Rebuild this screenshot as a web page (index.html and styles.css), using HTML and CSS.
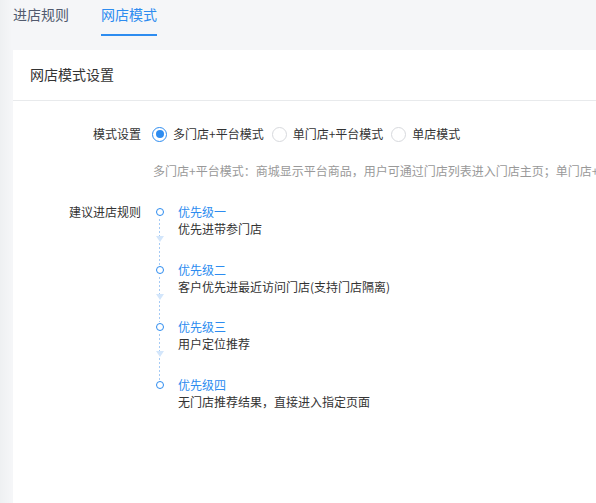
FILE: index.html
```html
<!DOCTYPE html>
<html lang="zh-CN">
<head>
<meta charset="utf-8">
<title>网店模式</title>
<link rel="stylesheet" href="styles.css">
</head>
<body>
<div class="page">
  <div class="tabs">
    <div class="tab">进店规则</div>
    <div class="tab active">网店模式</div>
  </div>
  <div class="card">
    <div class="card-head">网店模式设置</div>
    <div class="card-body">
      <div class="form-item">
        <div class="label label-tall">模式设置</div>
        <div class="content">
          <div class="radios">
            <span class="radio checked"><span class="radio-inner"></span><span class="radio-text">多门店+平台模式</span></span>
            <span class="radio"><span class="radio-inner"></span><span class="radio-text">单门店+平台模式</span></span>
            <span class="radio"><span class="radio-inner"></span><span class="radio-text">单店模式</span></span>
          </div>
          <div class="hint">多门店+平台模式：商城显示平台商品，用户可通过门店列表进入门店主页；单门店+平台模式：商城显示平台商品，用户进入指定门店</div>
        </div>
      </div>
      <div class="form-item rules">
        <div class="label">建议进店规则</div>
        <div class="content">
          <div class="timeline">
            <div class="tl-item">
              <div class="tl-axis"><span class="dot"></span><span class="seg seg-a"></span><span class="arrow"></span><span class="seg seg-b"></span></div>
              <div class="tl-content"><div class="tl-title">优先级一</div><div class="tl-desc">优先进带参门店</div></div>
            </div>
            <div class="tl-item">
              <div class="tl-axis"><span class="dot"></span><span class="seg seg-a"></span><span class="arrow"></span><span class="seg seg-b"></span></div>
              <div class="tl-content"><div class="tl-title">优先级二</div><div class="tl-desc">客户优先进最近访问门店(支持门店隔离)</div></div>
            </div>
            <div class="tl-item">
              <div class="tl-axis"><span class="dot"></span><span class="seg seg-a"></span><span class="arrow"></span><span class="seg seg-b"></span></div>
              <div class="tl-content"><div class="tl-title">优先级三</div><div class="tl-desc">用户定位推荐</div></div>
            </div>
            <div class="tl-item last">
              <div class="tl-axis"><span class="dot"></span></div>
              <div class="tl-content"><div class="tl-title">优先级四</div><div class="tl-desc">无门店推荐结果，直接进入指定页面</div></div>
            </div>
          </div>
        </div>
      </div>
    </div>
  </div>
</div>
</body>
</html>
```
FILE: styles.css
```css
html, body {
  margin: 0;
  padding: 0;
  height: 100%;
  overflow: hidden;
}
body {
  font-family: "Noto Sans CJK SC", "Liberation Sans", sans-serif;
  font-size: 12px;
  color: #333;
  background: linear-gradient(to right, #eef0f2 0, #f5f6f8 12px, #f5f6f8 100%);
}
.page {
  padding-left: 13px;
  height: 100%;
  display: flex;
  flex-direction: column;
}
.tabs {
  display: flex;
  gap: 32px;
  height: 36px;
}
.tab {
  font-size: 14px;
  line-height: 20px;
  padding-top: 4px;
  height: 30px;
  color: #515a6e;
  border-bottom: 2px solid transparent;
}
.tab.active {
  color: #2d8cf0;
  border-bottom-color: #2d8cf0;
}
.card {
  margin-top: 14px;
  background: #fff;
  flex: 1;
  overflow: hidden;
}
.card-head {
  height: 50px;
  line-height: 49px;
  padding-left: 17px;
  font-size: 14px;
  color: #333;
  border-bottom: 1px solid #e8eaec;
}
.card-body {
  padding-top: 17px;
}
.form-item {
  display: flex;
}
.label {
  width: 128px;
  flex: none;
  padding-right: 12px;
  text-align: right;
  line-height: 17px;
  color: #333;
}
.label-tall {
  line-height: 32px;
}
.content {
  flex: 1;
  min-width: 0;
}
.radios {
  height: 32px;
  display: flex;
  align-items: center;
  margin-left: -1px;
}
.radio {
  display: inline-flex;
  align-items: center;
  margin-right: 8px;
  color: #333;
  line-height: 18px;
}
.radio-inner {
  width: 15px;
  height: 15px;
  box-sizing: border-box;
  border: 1px solid #d7d9dd;
  border-radius: 50%;
  margin-right: 6px;
  background: #fff;
}
.radio.checked .radio-inner {
  border: 1.5px solid #2d8cf0;
  display: flex;
  align-items: center;
  justify-content: center;
}
.radio.checked .radio-inner::after {
  content: "";
  width: 8px;
  height: 8px;
  border-radius: 50%;
  background: #2d8cf0;
}
.hint {
  margin-top: 12px;
  line-height: 18px;
  color: #999;
  white-space: nowrap;
}
.rules {
  margin-top: 23px;
}
.timeline {
  display: flex;
  flex-direction: column;
}
.tl-item {
  display: flex;
}
.tl-axis {
  width: 13px;
  flex: none;
  margin-right: 12px;
  display: flex;
  flex-direction: column;
  align-items: center;
  padding-top: 5px;
}
.dot {
  width: 8px;
  height: 8px;
  box-sizing: border-box;
  border: 1.5px solid #2d8cf0;
  border-radius: 50%;
  flex: none;
}
.seg {
  width: 1px;
  background: repeating-linear-gradient(to bottom, #a6cbf5 0, #a6cbf5 2px, transparent 2px, transparent 4px);
}
.seg-a {
  height: 17px;
  margin-top: 3px;
}
.arrow {
  width: 0;
  height: 0;
  border-left: 4px solid transparent;
  border-right: 4px solid transparent;
  border-top: 6px solid #d3e6fb;
  flex: none;
}
.seg-b {
  flex: 1;
  margin-top: 1px;
  margin-bottom: -4px;
}
.tl-content {
  padding-bottom: 23.6px;
}
.tl-title {
  line-height: 17px;
  color: #2d8cf0;
}
.tl-desc {
  line-height: 17px;
  color: #333;
}
```
